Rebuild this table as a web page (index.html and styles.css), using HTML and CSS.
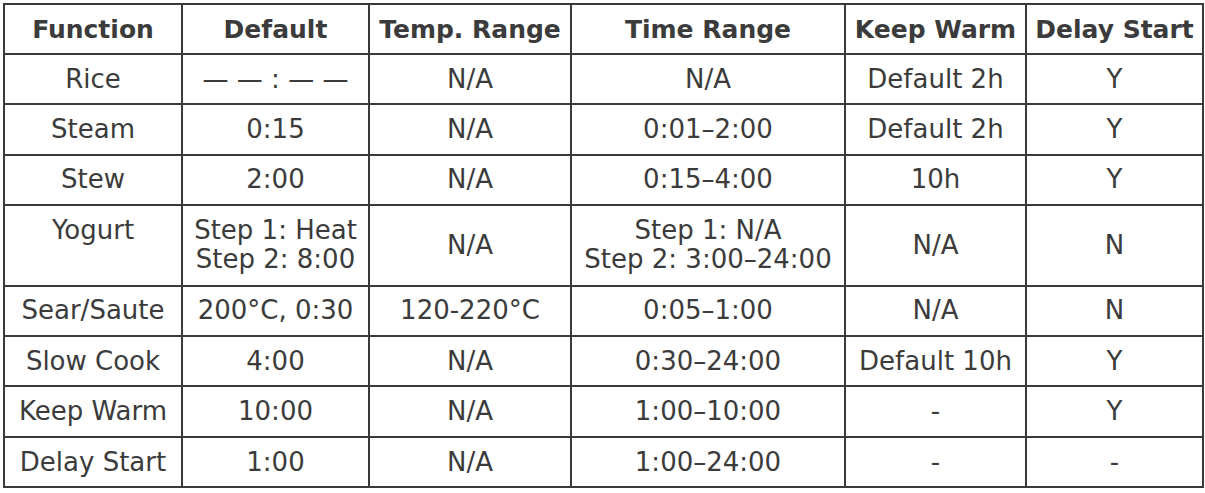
FILE: index.html
```html
<!DOCTYPE html>
<html>
<head>
  <title>Cooking Functions</title>
  <link rel="stylesheet" href="styles.css">
</head>
<body>
  <table class="functions">
    <colgroup>
      <col class="c-func">
      <col class="c-default">
      <col class="c-temp">
      <col class="c-time">
      <col class="c-warm">
      <col class="c-delay">
    </colgroup>
    <thead>
      <tr>
        <th>Function</th>
        <th>Default</th>
        <th>Temp. Range</th>
        <th>Time Range</th>
        <th>Keep Warm</th>
        <th>Delay Start</th>
      </tr>
    </thead>
    <tbody>
      <tr>
        <td>Rice</td>
        <td>— — : — —</td>
        <td>N/A</td>
        <td>N/A</td>
        <td>Default 2h</td>
        <td>Y</td>
      </tr>
      <tr>
        <td>Steam</td>
        <td>0:15</td>
        <td>N/A</td>
        <td>0:01–2:00</td>
        <td>Default 2h</td>
        <td>Y</td>
      </tr>
      <tr>
        <td>Stew</td>
        <td>2:00</td>
        <td>N/A</td>
        <td>0:15–4:00</td>
        <td>10h</td>
        <td>Y</td>
      </tr>
      <tr class="tall">
        <td class="top">Yogurt</td>
        <td>Step 1: Heat<br>Step 2: 8:00</td>
        <td>N/A</td>
        <td>Step 1: N/A<br>Step 2: 3:00–24:00</td>
        <td>N/A</td>
        <td>N</td>
      </tr>
      <tr>
        <td>Sear/Saute</td>
        <td>200°C, 0:30</td>
        <td>120-220°C</td>
        <td>0:05–1:00</td>
        <td>N/A</td>
        <td>N</td>
      </tr>
      <tr>
        <td>Slow Cook</td>
        <td>4:00</td>
        <td>N/A</td>
        <td>0:30–24:00</td>
        <td>Default 10h</td>
        <td>Y</td>
      </tr>
      <tr>
        <td>Keep Warm</td>
        <td>10:00</td>
        <td>N/A</td>
        <td>1:00–10:00</td>
        <td>-</td>
        <td>Y</td>
      </tr>
      <tr>
        <td>Delay Start</td>
        <td>1:00</td>
        <td>N/A</td>
        <td>1:00–24:00</td>
        <td>-</td>
        <td>-</td>
      </tr>
    </tbody>
  </table>
</body>
</html>
```

FILE: styles.css
```css
body {
  margin: 0;
  background: #fff;
  font-family: "DejaVu Sans", sans-serif;
  color: #3b3b3b;
}
.functions {
  margin: 3px 0 0 3px;
  width: 1199px;
  border-collapse: collapse;
  table-layout: fixed;
}
.c-func { width: 178px; }
.c-default { width: 187px; }
.c-temp { width: 202px; }
.c-time { width: 274px; }
.c-warm { width: 181px; }
.c-delay { width: 177px; }
th, td {
  border: 2px solid #3a3a3a;
  text-align: center;
  padding: 0;
  white-space: nowrap;
}
th {
  height: 48px;
  font-size: 25px;
  font-weight: bold;
}
td {
  height: 48.4px;
  font-size: 26px;
  line-height: 29px;
}
.tall td {
  height: 78.5px;
}
.tall td.top {
  height: 68.5px;
  vertical-align: top;
  padding-top: 10px;
}
```
